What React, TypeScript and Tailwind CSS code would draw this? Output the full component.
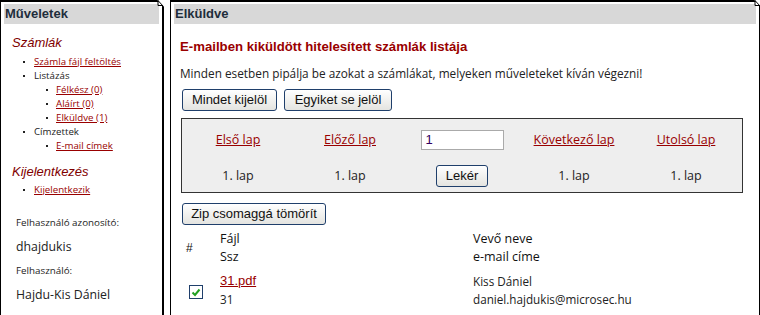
import React from "react";

const body = { fontFamily: '"Open Sans", "DejaVu Sans", sans-serif' };
const arial = { fontFamily: '"Liberation Sans", Arial, sans-serif' };

function Corner() {
  return (
    <svg className="absolute right-[-2px] top-[-2px]" width="8" height="8" viewBox="0 0 8 8">
      <polygon points="1,0 8,0 8,7" fill="white" />
      <path d="M1.5 0 L7.5 6.5" stroke="black" strokeWidth="1" fill="none" />
      <path d="M2 0.5 L2 5.5 L7 5.5" stroke="black" strokeWidth="1" fill="none" />
    </svg>
  );
}

function Item({ level, text, link }: { level: number; text: string; link?: boolean }) {
  return (
    <div className="flex h-[14px] items-center">
      <div className={level === 1 ? "w-[33px] flex justify-start pl-[22px]" : "w-[55px] flex justify-start pl-[45px]"}>
        <span className="block h-[2px] w-[2px] bg-[#222]" />
      </div>
      <span
        className={
          link
            ? "text-[9.7px] leading-[14px] text-[#990000] underline decoration-[#990000]"
            : "text-[9.7px] leading-[14px] text-[#222]"
        }
      >
        {text}
      </span>
    </div>
  );
}

function Btn({ children, w }: { children: React.ReactNode; w: string }) {
  return (
    <button
      className={`h-[22px] ${w} rounded-[3px] border border-[#1f3f6b] bg-gradient-to-b from-[#ffffff] to-[#e4e4e0] text-[13px] leading-[20px] text-[#111]`}
      style={arial}
    >
      {children}
    </button>
  );
}

export default function App() {
  return (
    <div className="flex h-[315px] w-[760px] overflow-hidden bg-white" style={body}>
      {/* Left panel */}
      <div className="relative h-[330px] w-[164px] shrink-0 border-l border-r-2 border-t-2 border-black pt-[2px]">
        <Corner />
        <div className="mx-[3px] h-[20px] bg-[#d8d8d8] pl-[1px] text-[13px] font-bold leading-[20px] text-[#1e2d3b]" style={arial}>
          Műveletek
        </div>
        <div className="mt-[11px] h-[16px] pl-[11px] text-[13px] italic leading-[16px] text-[#800000]" style={arial}>
          Számlák
        </div>
        <div className="mt-[4px]">
          <Item level={1} text="Számla fájl feltöltés" link />
          <Item level={1} text="Listázás" />
          <Item level={2} text="Félkész (0)" link />
          <Item level={2} text="Aláírt (0)" link />
          <Item level={2} text="Elküldve (1)" link />
          <Item level={1} text="Címzettek" />
          <Item level={2} text="E-mail címek" link />
        </div>
        <div className="mt-[11px] h-[16px] pl-[11px] text-[13px] italic leading-[16px] text-[#800000]" style={arial}>
          Kijelentkezés
        </div>
        <div className="mt-[3px]">
          <Item level={1} text="Kijelentkezik" link />
        </div>
        <div className="mt-[19px] h-[14px] pl-[15px] text-[9.8px] leading-[14px] text-[#222]">Felhasználó azonosító:</div>
        <div className="mt-[9px] h-[16px] pl-[15px] text-[12.3px] leading-[16px] text-[#222]">dhajdukis</div>
        <div className="mt-[9px] h-[14px] pl-[15px] text-[9.8px] leading-[14px] text-[#222]">Felhasználó:</div>
        <div className="mt-[9px] h-[16px] pl-[15px] text-[12.3px] leading-[16px] text-[#222]">Hajdu-Kis Dániel</div>
        <div className="mt-[10px] h-[14px] pl-[15px] text-[9.8px] leading-[14px] text-[#990000] underline">Jelszó módosítás</div>
      </div>

      <div className="w-[6px] shrink-0" />

      {/* Right panel */}
      <div className="relative h-[330px] w-[590px] shrink-0 border-l border-r border-t-2 border-black pt-[2px]">
        <Corner />
        <div className="mx-[3px] h-[20px] bg-[#d8d8d8] pl-[1px] text-[13px] font-bold leading-[20px] text-[#1e2d3b]" style={arial}>
          Elküldve
        </div>
        <div className="pl-[9px]">
          <div className="mt-[15px] h-[16px] text-[13.2px] font-bold leading-[16px] text-[#990000]" style={arial}>
            E-mailben kiküldött hitelesített számlák listája
          </div>
          <div className="mt-[11px] h-[14px] whitespace-nowrap text-[11.8px] leading-[14px] text-[#222]">
            Minden esetben pipálja be azokat a számlákat, melyeken műveleteket kíván végezni!
          </div>
          <div className="mt-[9px] flex gap-[7px] pl-[2px]">
            <Btn w="w-[95px]">Mindet kijelöl</Btn>
            <Btn w="w-[108px]">Egyiket se jelöl</Btn>
          </div>
          <div className="ml-[1px] mt-[7px] w-[562px] border border-[#333] bg-[#eeeeee] pb-[5px] pt-[11px]">
            <div className="grid h-[20px] grid-cols-5 items-center text-center text-[12.5px] leading-[20px]">
              <span className="text-[#990000] underline">Első lap</span>
              <span className="text-[#990000] underline">Előző lap</span>
              <div className="flex justify-center">
                <div className="h-[20px] w-[83px] border border-[#aaa] bg-white pl-[4px] text-left text-[13px] leading-[18px] text-[#300060]" style={arial}>
                  1
                </div>
              </div>
              <span className="text-[#990000] underline">Következő lap</span>
              <span className="text-[#990000] underline">Utolsó lap</span>
            </div>
            <div className="mt-[15px] grid h-[22px] grid-cols-5 items-center text-center text-[12.5px] leading-[22px] text-[#222]">
              <span>1. lap</span>
              <span>1. lap</span>
              <div className="flex justify-center">
                <Btn w="w-[52px]">Lekér</Btn>
              </div>
              <span>1. lap</span>
              <span>1. lap</span>
            </div>
          </div>
          <div className="mt-[7px] pl-[2px]">
            <Btn w="w-[144px]">Zip csomaggá tömörít</Btn>
          </div>
          <div className="mt-[5px] flex text-[12.5px] leading-[18px] text-[#111]">
            <div className="flex w-[40px] items-center pl-[6px] text-[12px]" style={arial}>#</div>
            <div className="w-[253px]">
              <div>Fájl</div>
              <div>Ssz</div>
            </div>
            <div>
              <div>Vevő neve</div>
              <div>e-mail címe</div>
            </div>
          </div>
          <div className="mt-[6px] flex text-[11.7px] leading-[18px] text-[#222]">
            <div className="w-[40px] pl-[9px] pt-[13px]">
              <div className="flex h-[14px] w-[14px] items-center justify-center border border-[#1f3f6b] bg-white">
                <svg width="10" height="9" viewBox="0 0 10 9">
                  <path d="M1.5 4.5 L4 7 L8.5 1.5" stroke="#22a022" strokeWidth="2" fill="none" />
                </svg>
              </div>
            </div>
            <div className="w-[253px]">
              <div className="text-[13px] text-[#990000] underline" style={arial}>31.pdf</div>
              <div>31</div>
            </div>
            <div>
              <div>Kiss Dániel</div>
              <div>daniel.hajdukis@microsec.hu</div>
            </div>
          </div>
        </div>
      </div>
    </div>
  );
}
